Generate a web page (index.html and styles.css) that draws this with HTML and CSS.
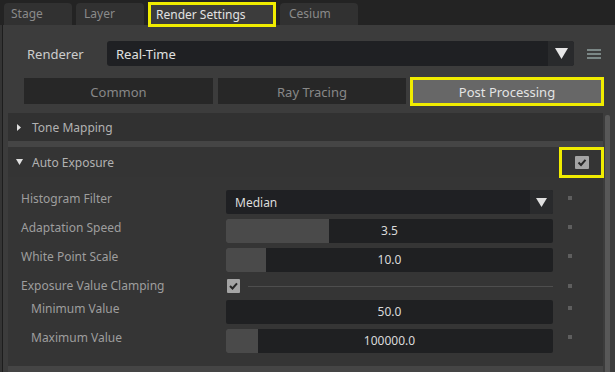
FILE: index.html
```html
<!DOCTYPE html>
<html>
<head>
<meta charset="utf-8">
<link rel="stylesheet" href="styles.css">
</head>
<body>
<div class="tabbar">
  <div class="tab t-stage">Stage</div>
  <div class="tab t-layer">Layer</div>
  <div class="tab active">Render Settings</div>
  <div class="tab t-cesium">Cesium</div>
</div>
<div class="panel">
  <div class="renderer-row">
    <span class="renderer-label">Renderer</span>
    <div class="combo main-combo">
      <span class="combo-text">Real-Time</span>
      <span class="combo-arrow big"><svg width="13" height="11" viewBox="0 0 13 11"><polygon points="0,0 13,0 6.5,11" fill="#e6e6e6"/></svg></span>
    </div>
    <svg class="hamburger" width="14" height="12" viewBox="0 0 14 12"><rect x="0" y="1" width="14" height="2" fill="#7b8786"/><rect x="0" y="5" width="14" height="2" fill="#7b8786"/><rect x="0" y="9" width="14" height="2" fill="#7b8786"/></svg>
  </div>
  <div class="subtabs">
    <div class="subtab st-common">Common</div>
    <div class="subtab st-ray">Ray Tracing</div>
    <div class="subtab st-post">Post Processing</div>
  </div>
  <div class="scroll">
    <div class="content">
      <div class="frame">
        <div class="hdr hdr-tone">
          <svg class="tri" width="6" height="7" viewBox="0 0 6 7"><polygon points="1,0 5,3.5 1,7" fill="#e0e0e0"/></svg>
          <span class="hdr-text">Tone Mapping</span>
        </div>
      </div>
      <div class="frame">
        <div class="hdr hdr-auto">
          <svg class="tri" width="7" height="6" viewBox="0 0 7 6"><polygon points="0,0 7,0 3.5,6" fill="#e0e0e0"/></svg>
          <span class="hdr-text">Auto Exposure</span>
          <span class="spacer"></span>
          <span class="highlight-box">
            <svg class="check" width="14" height="13" viewBox="0 0 14 13"><rect width="14" height="13" rx="1" fill="#a4a4a4"/><polyline points="3.5,6.5 6,9 10.5,3.8" fill="none" stroke="#262626" stroke-width="2"/></svg>
          </span>
        </div>
        <div class="body">
          <div class="row">
            <span class="label">Histogram Filter</span>
            <div class="combo field">
              <span class="combo-text small">Median</span>
              <span class="combo-arrow"><svg width="11" height="9" viewBox="0 0 11 9"><polygon points="0,0 11,0 5.5,9" fill="#e0e0e0"/></svg></span>
            </div>
            <span class="dot"></span>
          </div>
          <div class="row">
            <span class="label">Adaptation Speed</span>
            <div class="slider field">
              <span class="fill" style="width:103px"></span>
              <span class="value">3.5</span>
            </div>
            <span class="dot"></span>
          </div>
          <div class="row">
            <span class="label">White Point Scale</span>
            <div class="slider field">
              <span class="fill" style="width:40px"></span>
              <span class="value">10.0</span>
            </div>
            <span class="dot"></span>
          </div>
          <div class="row row-check">
            <span class="label">Exposure Value Clamping</span>
            <div class="check-field">
              <svg class="check" width="13" height="14" viewBox="0 0 13 14"><rect width="13" height="14" rx="1" fill="#a4a4a4"/><polyline points="3,7 5.5,9.5 10,4.3" fill="none" stroke="#262626" stroke-width="2"/></svg>
              <span class="line"></span>
            </div>
            <span class="dot"></span>
          </div>
          <div class="row">
            <span class="label indent">Minimum Value</span>
            <div class="slider field">
              <span class="fill" style="width:0px"></span>
              <span class="value">50.0</span>
            </div>
            <span class="dot"></span>
          </div>
          <div class="row">
            <span class="label indent">Maximum Value</span>
            <div class="slider field">
              <span class="fill" style="width:32px"></span>
              <span class="value">100000.0</span>
            </div>
            <span class="dot"></span>
          </div>
        </div>
      </div>
    </div>
    <div class="scrollbar"></div>
  </div>
</div>
</body>
</html>
```
FILE: styles.css
```css
* { box-sizing: border-box; }
html, body { margin: 0; padding: 0; }
body {
  width: 615px;
  height: 372px;
  overflow: hidden;
  background: #343434;
  font-family: "Noto Sans", "Open Sans", sans-serif;
  font-size: 12px;
  color: #a0a0a0;
  display: flex;
  flex-direction: column;
}

/* top tabs */
.tabbar {
  height: 25px;
  flex: none;
  display: flex;
  align-items: flex-end;
  gap: 4px;
  padding-left: 4px;
  background: #232323;
  position: relative;
  z-index: 1;
}
.tab {
  height: 22px;
  line-height: 22px;
  padding: 0 8px;
  background: #313131;
  border-radius: 4px 4px 0 0;
  color: #8a8a8a;
  white-space: nowrap;
}
.t-stage { width: 68px; padding-left: 7px; }
.t-layer { width: 68px; }
.t-cesium { width: 78px; padding-left: 9px; }
.tab.active {
  width: 128px;
  height: 25px;
  margin-bottom: -2px;
  line-height: 19px;
  padding-left: 5px;
  border: 3px solid #f0ec00;
  border-radius: 0;
  background: #3c3c3c;
  color: #e2e2e2;
}

/* panel */
.panel {
  flex: 1;
  min-height: 0;
  margin-left: 2px;
  border-left: 1px solid #1d1d1d;
  background: #3c3c3c;
  display: flex;
  flex-direction: column;
  padding-top: 16px;
}
.renderer-row {
  display: flex;
  align-items: center;
  height: 25px;
  padding-left: 24px;
  flex: none;
}
.renderer-label {
  width: 80px;
  font-size: 13px;
  color: #cdcdcd;
}
.combo {
  display: flex;
  align-items: center;
  background: #1f2023;
  border-radius: 3px;
  overflow: hidden;
}
.main-combo {
  width: 467px;
  height: 25px;
}
.combo-text {
  flex: 1;
  padding-left: 9px;
  font-size: 13px;
  color: #e0e0e0;
}
.combo-text.small { font-size: 12px; color: #dcdcdc; }
.combo-arrow {
  width: 23px;
  align-self: stretch;
  background: #292a2c;
  display: flex;
  align-items: center;
  justify-content: center;
}
.combo-arrow.big { width: 26px; }
.hamburger { margin-left: 13px; }

/* sub tabs */
.subtabs {
  display: flex;
  height: 26px;
  margin: 12px 0 0 21px;
  flex: none;
}
.subtab {
  display: flex;
  align-items: center;
  justify-content: center;
  padding-top: 1px;
  background: #272727;
  color: #888;
  font-size: 13px;
}
.st-common { width: 189px; }
.st-ray { width: 188px; margin-left: 5px; }
.st-post {
  width: 194px;
  margin: -1px 0 -2px 4px;
  height: 29px;
  border: 3px solid #f0ec00;
  background: #676767;
  color: #e4e4e4;
  position: relative;
}

/* scroll area */
.scroll {
  flex: 1;
  min-height: 0;
  display: flex;
  margin-top: 9px;
}
.content {
  width: 595px;
  margin-left: 5px;
  display: flex;
  flex-direction: column;
  gap: 6px;
  background: #454545;
}
.frame { background: #343434; }
.hdr {
  display: flex;
  align-items: center;
  padding-left: 8px;
  background: #313131;
  color: #b2b2b2;
}
.hdr-tone { height: 28px; }
.hdr-tone .tri { margin-right: 10px; }
.hdr-auto { height: 30px; background: #343434; align-items: flex-start; }
.hdr-auto .tri { margin-top: 12px; margin-right: 9px; }
.hdr-auto .hdr-text { margin-top: 7px; }
.spacer { flex: 1; }
.highlight-box {
  position: relative;
  width: 45px;
  height: 31px;
  margin-right: -1px;
  border: 3px solid #f0ec00;
  display: flex;
  align-items: center;
  justify-content: center;
}
.highlight-box .check { margin-left: 1px; }

.body {
  padding: 13px 0 13px 0;
  display: flex;
  flex-direction: column;
  gap: 5px;
  background: #353535;
}
.row {
  display: flex;
  align-items: center;
  height: 24px;
}
.row-check { height: 18px; }
.label {
  align-self: flex-start;
  width: 218px;
  padding-left: 13px;
  line-height: 17px;
  color: #9e9e9e;
  white-space: nowrap;
}
.label.indent { padding-left: 23px; }
.field {
  width: 327px;
  height: 24px;
  border-radius: 2px;
}
.slider {
  display: grid;
  background: #1f2022;
  overflow: hidden;
}
.fill {
  grid-area: 1 / 1;
  background: #4a4a4a;
  height: 24px;
}
.value {
  grid-area: 1 / 1;
  align-self: center;
  justify-self: center;
  color: #dadada;
  line-height: 16px;
}
.check-field {
  width: 327px;
  display: flex;
  align-items: center;
  padding-left: 1px;
}
.line {
  flex: 1;
  height: 1px;
  margin-left: 8px;
  background: #4e4e4e;
}
.dot {
  align-self: flex-start;
  width: 4px;
  height: 4px;
  margin-top: 6px;
  margin-left: 15px;
  background: #5e5e5e;
}
.row-check .dot { margin-top: 7px; }

.scrollbar {
  width: 5px;
  margin-left: 2px;
  margin-top: 2px;
  background: #585858;
  border-radius: 2px 2px 0 0;
}
```
